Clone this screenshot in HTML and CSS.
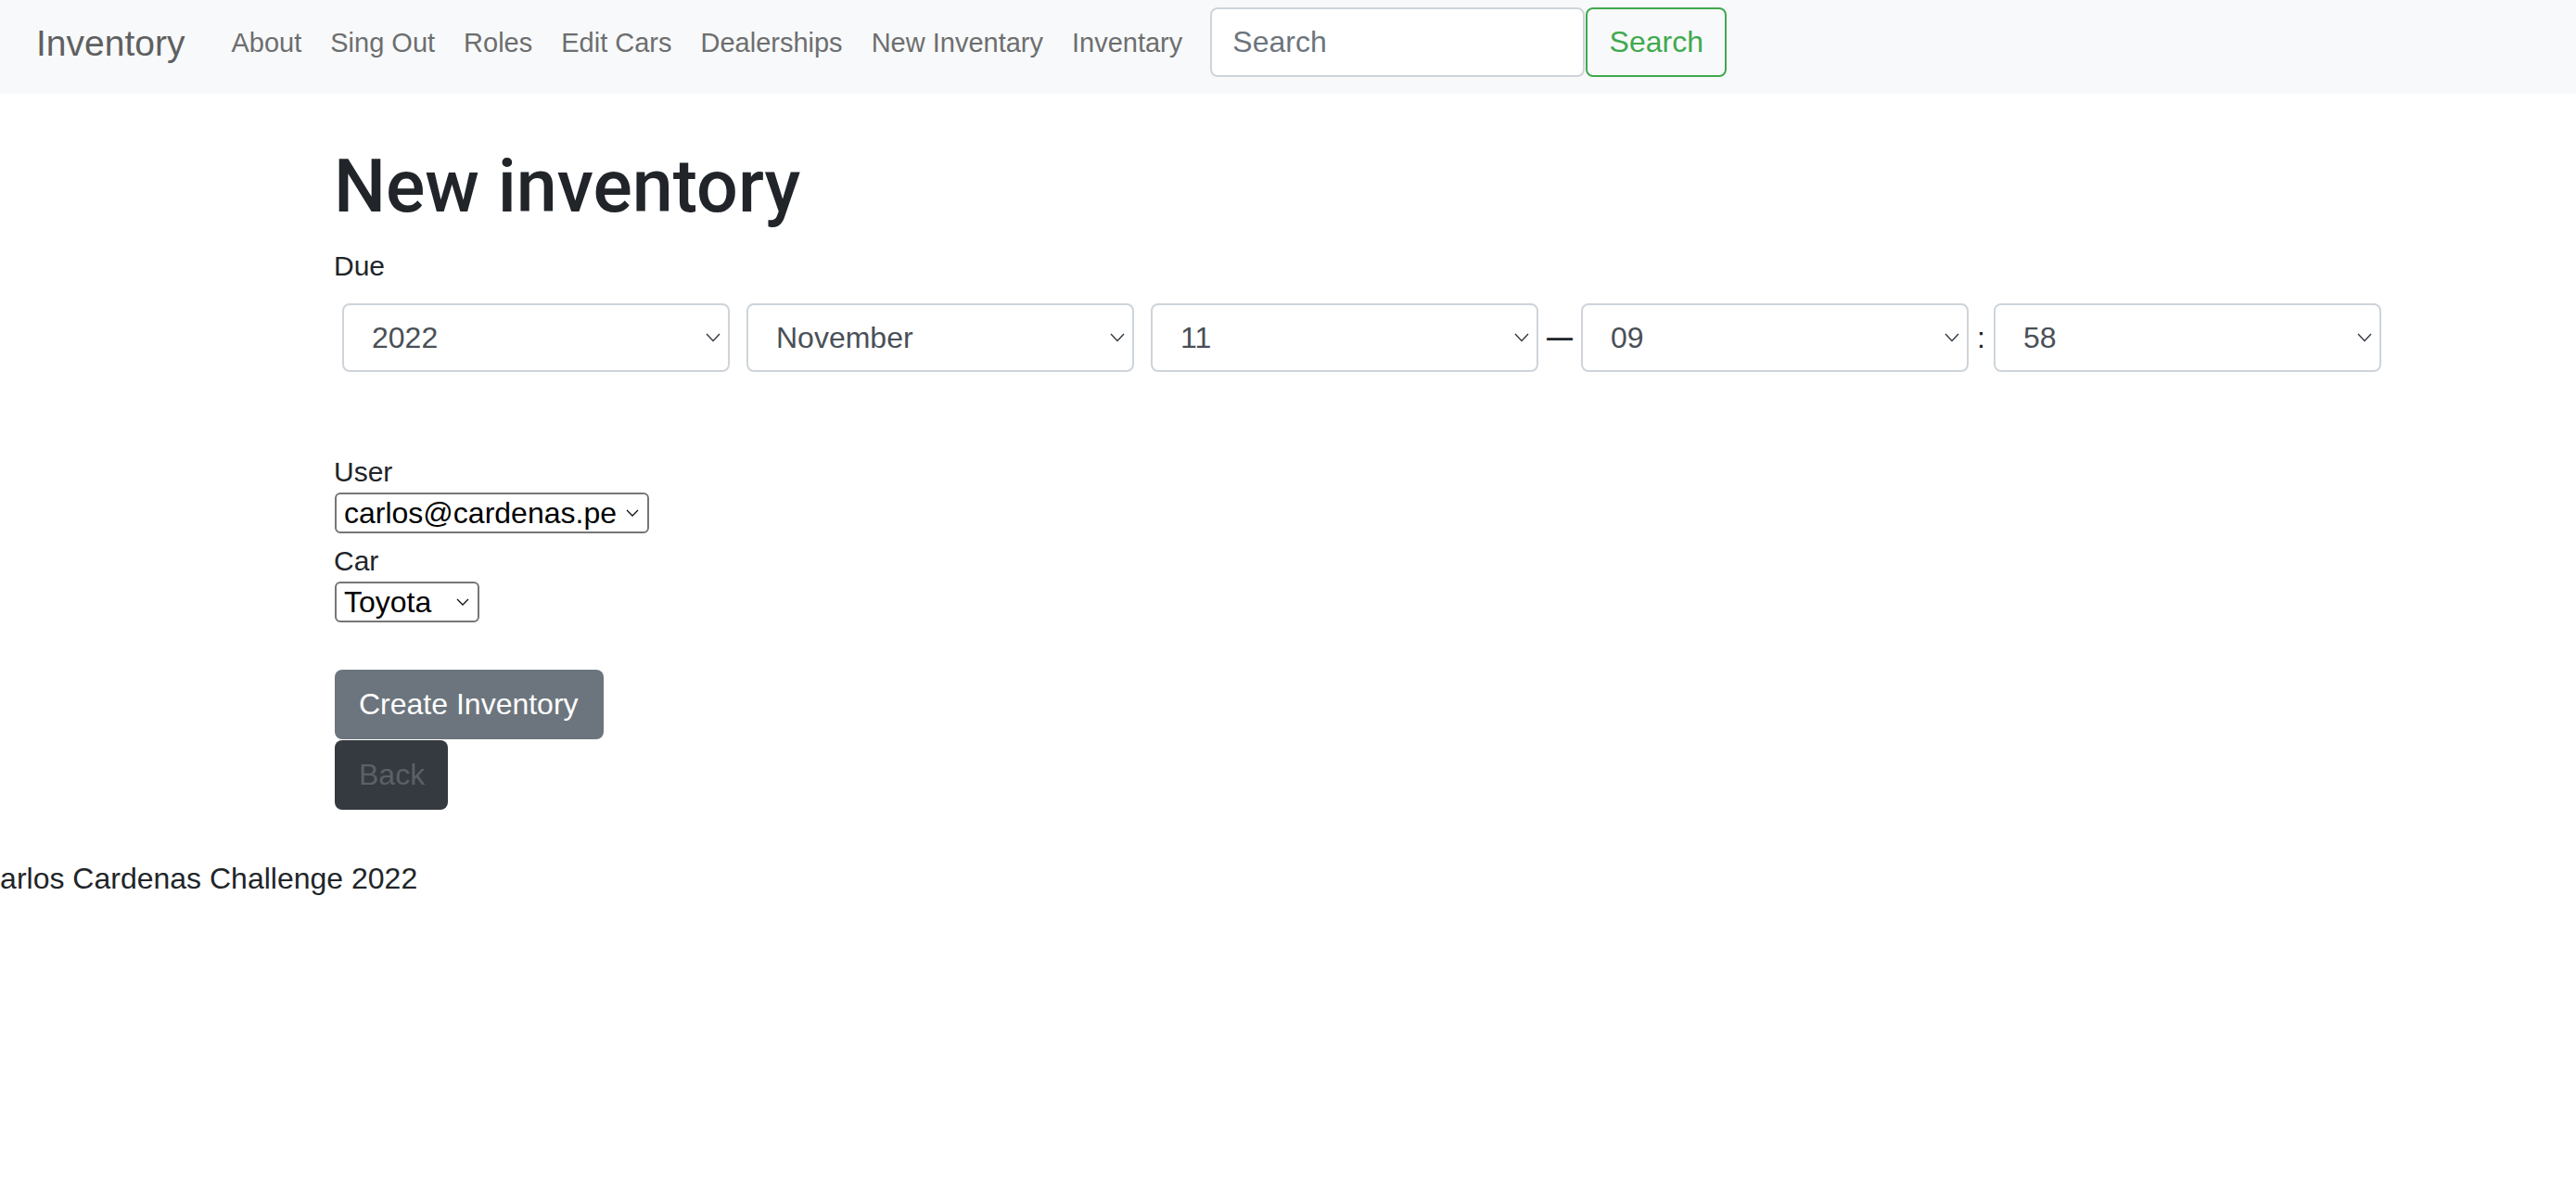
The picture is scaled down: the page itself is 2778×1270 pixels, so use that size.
FILE: index.html
```html
<!DOCTYPE html>
<html lang="en">
<head>
<meta charset="utf-8">
<title>Inventory</title>
<link rel="stylesheet" href="styles.css">
</head>
<body>
<nav class="navbar">
  <a class="brand" href="#">Inventory</a>
  <ul class="nav-links">
    <li><a href="#">About</a></li>
    <li><a href="#">Sing Out</a></li>
    <li><a href="#">Roles</a></li>
    <li><a href="#">Edit Cars</a></li>
    <li><a href="#">Dealerships</a></li>
    <li><a href="#">New Inventary</a></li>
    <li><a href="#">Inventary</a></li>
  </ul>
  <form class="search-form">
    <input class="search-input" type="search" placeholder="Search">
    <button class="search-btn" type="button">Search</button>
  </form>
</nav>

<main class="content">
  <h1 class="title">New inventory</h1>
  <label class="label label-due">Due</label>
  <div class="date-row">
    <select class="date-select"><option>2022</option></select>
    <select class="date-select"><option>November</option></select>
    <select class="date-select"><option>11</option></select>
    <span class="sep sep-dash">—</span>
    <select class="date-select"><option>09</option></select>
    <span class="sep">:</span>
    <select class="date-select"><option>58</option></select>
  </div>

  <label class="label label-user">User</label>
  <select class="plain-select user-select"><option>carlos@cardenas.pe</option></select>
  <label class="label label-car">Car</label>
  <select class="plain-select car-select"><option>Toyota</option></select>

  <div class="actions">
    <button class="btn btn-create" type="button">Create Inventory</button>
    <a class="btn btn-back" href="#">Back</a>
  </div>
</main>

<footer class="footer">
  <p class="footer-text">Carlos Cardenas Challenge 2022</p>
</footer>
</body>
</html>
```

FILE: styles.css
```css
* { box-sizing: border-box; }

html, body {
  margin: 0;
  padding: 0;
  background: #ffffff;
}

body {
  font-family: "Liberation Sans", Arial, sans-serif;
  font-size: 32px;
  color: #212529;
}

/* ---------- navbar ---------- */
.navbar {
  height: 101px;
  background: #f8f9fa;
  display: flex;
  align-items: flex-start;
  padding: 8px 0 18px 39px;
}

.brand {
  height: 75px;
  display: flex;
  align-items: center;
  padding-top: 3px;
  font-size: 39px;
  color: #5f6060;
  text-decoration: none;
  margin-right: 50px;
}

.nav-links {
  list-style: none;
  margin: 0;
  padding: 0;
  height: 75px;
  display: flex;
  align-items: center;
  gap: 31px;
}

.nav-links a {
  font-size: 29px;
  color: #6d6e6f;
  text-decoration: none;
}

.search-form {
  display: flex;
  margin-left: 30px;
}

.search-input {
  width: 404px;
  height: 75px;
  border: 2px solid #ced4da;
  border-radius: 8px;
  padding: 0 20px 0 22px;
  font-family: "Liberation Sans", Arial, sans-serif;
  font-size: 32px;
  color: #495057;
  background: #fff;
  outline: none;
}

.search-input::placeholder { color: #6c757d; }

.search-btn {
  width: 152px;
  height: 75px;
  margin-left: 1px;
  border: 2px solid #3fa94f;
  border-radius: 8px;
  background: transparent;
  color: #3fa94f;
  font-family: "Liberation Sans", Arial, sans-serif;
  font-size: 32px;
  padding: 0;
}

/* ---------- content ---------- */
.content {
  padding: 52px 0 0 360px;
}

.title {
  margin: 0 0 15px;
  font-family: Roboto, "Liberation Sans", Arial, sans-serif;
  font-weight: 500;
  font-size: 79px;
  line-height: 96px;
  color: #212529;
}

.label {
  display: block;
  font-size: 30px;
  line-height: 45px;
  color: #212529;
}

.date-row {
  display: flex;
  align-items: center;
  margin-top: 18px;
}

.date-select {
  -webkit-appearance: none;
  appearance: none;
  flex: 0 0 auto;
  width: 418px;
  height: 74px;
  margin: 0 9px;
  padding: 0 40px 0 30px;
  font-family: "Liberation Sans", Arial, sans-serif;
  font-size: 32px;
  color: #495057;
  border: 2px solid #ced4da;
  border-radius: 8px;
  background: #fff url("data:image/svg+xml,%3Csvg xmlns='http://www.w3.org/2000/svg' viewBox='0 0 16 10'%3E%3Cpath d='M1 1l7 7.5 7-7.5' fill='none' stroke='%23343a40' stroke-width='1.4'/%3E%3C/svg%3E") no-repeat right 8px center / 16px 10px;
}

.sep {
  font-size: 32px;
  color: #212529;
  line-height: 1;
}

.sep-dash {
  font-size: 28px;
  font-weight: 700;
}

.label-user { margin-top: 85px; }
.label-car { margin-top: 7px; }

.plain-select {
  -webkit-appearance: none;
  appearance: none;
  display: block;
  height: 44px;
  margin-left: 1px;
  padding: 0 30px 0 8px;
  font-family: "Liberation Sans", Arial, sans-serif;
  font-size: 32px;
  color: #000;
  border: 2px solid #767676;
  border-radius: 6px;
  background: #fff url("data:image/svg+xml,%3Csvg xmlns='http://www.w3.org/2000/svg' viewBox='0 0 14 8'%3E%3Cpath d='M1 1l6 6 6-6' fill='none' stroke='%23111' stroke-width='1.3'/%3E%3C/svg%3E") no-repeat right 9px center / 14px 8px;
}

.user-select { width: 339px; }
.car-select { width: 156px; }

.actions {
  margin-top: 51px;
  display: flex;
  flex-direction: column;
  align-items: flex-start;
}

.btn {
  display: inline-block;
  height: 75px;
  line-height: 75px;
  padding: 0 27px 0 26px;
  margin-left: 1px;
  border: 0;
  border-radius: 8px;
  font-family: "Liberation Sans", Arial, sans-serif;
  font-size: 32px;
  text-decoration: none;
}

.btn-create {
  background: #6c757d;
  color: #ffffff;
}

.btn-back {
  margin-top: 1px;
  padding: 0 25px 0 26px;
  background: #343a40;
  color: #5b6065;
}

/* ---------- footer ---------- */
.footer {
  margin-top: 50px;
}

.footer-text {
  margin: 0 0 0 -23px;
  font-size: 32px;
  line-height: 48px;
  color: #212529;
}
```
